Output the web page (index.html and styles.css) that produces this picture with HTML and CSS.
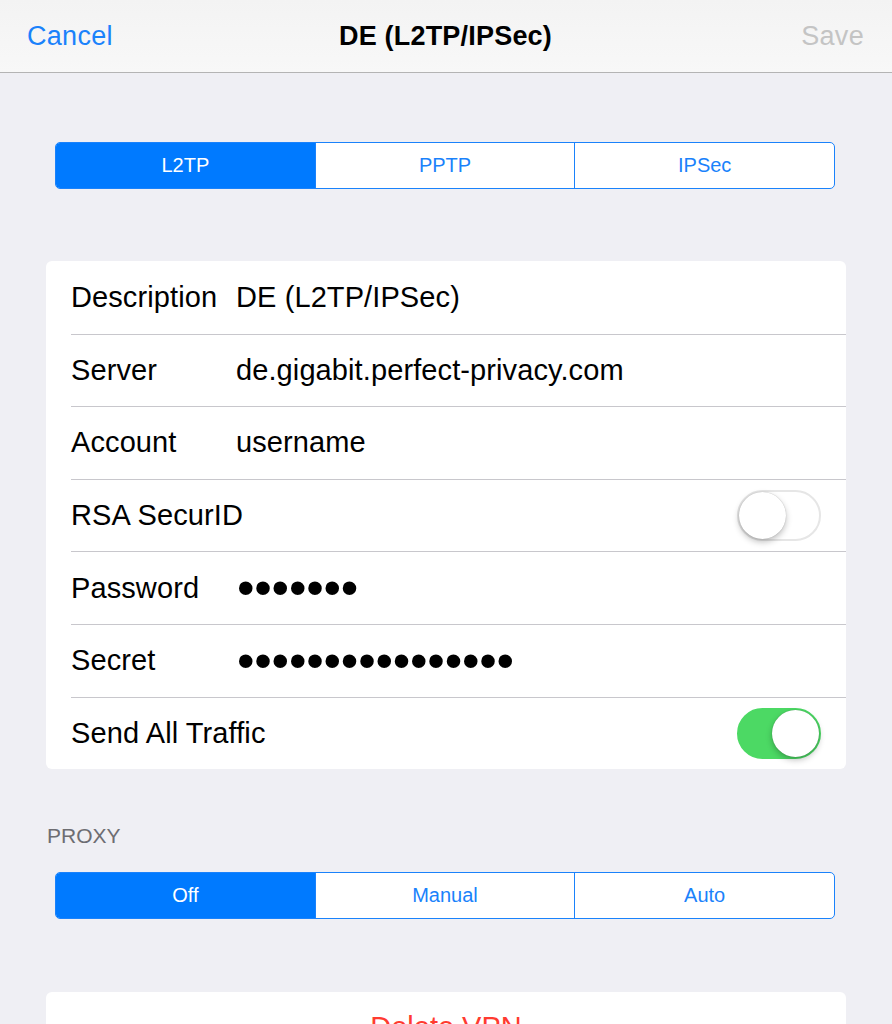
FILE: index.html
```html
<!DOCTYPE html>
<html lang="en">
<head>
    <meta charset="UTF-8">
    <meta name="viewport" content="width=device-width, initial-scale=1.0">
    <title>DE (L2TP/IPSec)</title>
    <link rel="stylesheet" href="styles.css">
</head>
<body>
    <div class="navbar">
        <span class="nav-btn">Cancel</span>
        <span class="nav-title">DE (L2TP/IPSec)</span>
        <span class="nav-btn disabled">Save</span>
    </div>

    <div class="content">
        <!-- VPN type -->
        <div class="segmented type-seg">
            <span class="seg active">L2TP</span>
            <span class="seg">PPTP</span>
            <span class="seg">IPSec</span>
        </div>

        <!-- Settings -->
        <div class="card">
            <div class="row"><span class="label">Description</span><span class="value">DE (L2TP/IPSec)</span></div>
            <div class="row"><span class="label">Server</span><span class="value">de.gigabit.perfect-privacy.com</span></div>
            <div class="row"><span class="label">Account</span><span class="value">username</span></div>
            <div class="row"><span class="label">RSA SecurID</span><span class="switch"><span class="knob"></span></span></div>
            <div class="row"><span class="label">Password</span><span class="value dots">•••••••</span></div>
            <div class="row"><span class="label">Secret</span><span class="value dots">••••••••••••••••</span></div>
            <div class="row"><span class="label">Send All Traffic</span><span class="switch on"><span class="knob"></span></span></div>
        </div>

        <div class="section-title">PROXY</div>
        <div class="segmented proxy-seg">
            <span class="seg active">Off</span>
            <span class="seg">Manual</span>
            <span class="seg">Auto</span>
        </div>

        <div class="card delete-card">
            <div class="delete">Delete VPN</div>
        </div>
    </div>
</body>
</html>
```

FILE: styles.css
```css
body {
    margin: 0;
    background: #efeff4;
    font-family: "Liberation Sans", Arial, sans-serif;
    color: #000;
    overflow: hidden;
}

.navbar {
    height: 72px;
    display: grid;
    grid-template-columns: 1fr auto 1fr;
    align-items: center;
    padding: 0 28px 0 27px;
    background: linear-gradient(#f3f3f3, #f8f8f8);
    border-bottom: 1px solid #b4b4b4;
}

.nav-btn {
    font-size: 27px;
    color: #1a82fb;
    letter-spacing: 0.3px;
}

.nav-btn.disabled {
    color: #c4c4c4;
    justify-self: end;
}

.nav-title {
    font-size: 27px;
    font-weight: bold;
    letter-spacing: 0.2px;
}

.content {
    padding: 69px 46px 0 46px;
}

.segmented {
    display: flex;
    margin: 0 11px 0 9px;
    height: 47px;
    border: 1px solid #1a82fb;
    border-radius: 5px;
    overflow: hidden;
    background: #fff;
    box-sizing: border-box;
}

.seg {
    flex: 1;
    display: flex;
    align-items: center;
    justify-content: center;
    font-size: 20px;
    color: #1a82fb;
    border-left: 1px solid #1a82fb;
}

.seg:first-child {
    border-left: none;
}

.seg.active {
    background: #007aff;
    color: #fff;
}

.card {
    background: #fff;
    border-radius: 6px;
    margin-top: 72px;
}

.row {
    height: 71.6px;
    display: flex;
    align-items: center;
    margin-left: 25px;
    padding-right: 25px;
    border-top: 1px solid #c8c7cc;
    font-size: 29px;
    letter-spacing: 0.1px;
}

.row:first-child {
    height: 72.6px;
    border-top: none;
}

.label {
    width: 165px;
    white-space: nowrap;
}

.value {
    flex: 1;
}

.dots {
    font-size: 50px;
    line-height: 1;
    letter-spacing: -0.2px;
    margin-left: 1px;
}

.switch {
    margin-left: auto;
    width: 84px;
    height: 51px;
    border-radius: 26px;
    box-sizing: border-box;
    border: 2px solid #e6e6e6;
    background: #fff;
    position: relative;
}

.switch .knob {
    position: absolute;
    top: 0;
    left: 0;
    width: 47px;
    height: 47px;
    border-radius: 50%;
    background: #fff;
    box-shadow: 0 3px 6px rgba(0, 0, 0, 0.25), 0 0 1px rgba(0, 0, 0, 0.3);
}

.switch.on {
    background: #4cd964;
    border-color: #4cd964;
}

.switch.on .knob {
    left: auto;
    right: 0;
}

.section-title {
    margin-top: 55px;
    margin-left: 1px;
    font-size: 21px;
    color: #6d6d72;
}

.proxy-seg {
    margin-top: 24px;
}

.delete-card {
    margin-top: 73px;
    height: 80px;
}

.delete {
    text-align: center;
    padding-top: 19px;
    font-size: 29px;
    color: #ff3b30;
}
```
